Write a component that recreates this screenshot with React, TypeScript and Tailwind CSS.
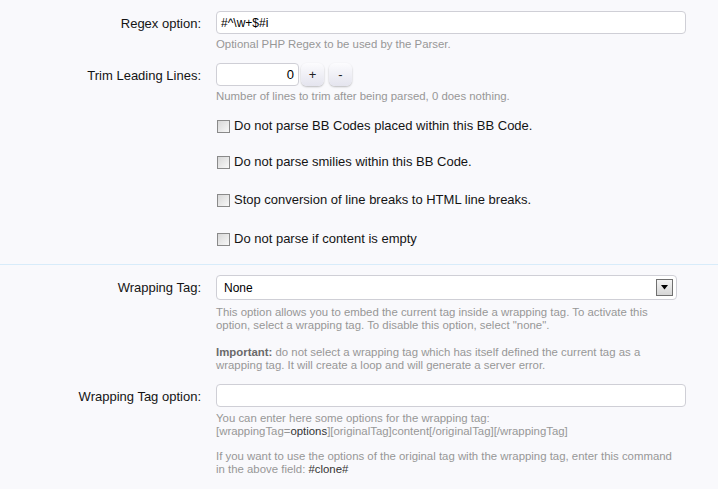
const Hint = ({ children, className = "" }: { children: React.ReactNode; className?: string }) => (
  <p className={"whitespace-nowrap text-[11.4px] leading-[13px] text-[#979797] " + className}>{children}</p>
);

const Row = ({ label, children, className = "" }: { label?: string; children: React.ReactNode; className?: string }) => (
  <div className={"flex " + className}>
    <div className="w-[201px] shrink-0 pt-[3px] text-right text-[13px] text-[#141414]">{label}</div>
    <div className="ml-[15px] flex-1 pr-[32px]">{children}</div>
  </div>
);

const Check = ({ label, className = "" }: { label: string; className?: string }) => (
  <label className={"flex items-center gap-[4px] text-[13px] leading-[20px] text-[#141414] " + className}>
    <span className="ml-[1px] h-[13px] w-[13px] border border-[#8a8a8a] bg-gradient-to-br from-[#d8d8d8] to-[#f8f8f8]" />
    <span>{label}</span>
  </label>
);

const StepButton = ({ text }: { text: string }) => (
  <button className="flex h-[23px] w-[23px] items-center justify-center rounded-[6px] bg-gradient-to-b from-[#fcfcfe] to-[#e4e4ee] text-[13px] text-[#222] shadow-[0_1px_2px_rgba(0,0,0,0.25)]">
    {text}
  </button>
);

export default function App() {
  return (
    <div className="min-h-screen bg-[#f9f9fc] font-['Liberation_Sans',Arial,sans-serif]">
      <div className="pt-[11px]">
        <Row label="Regex option:">
          <div className="flex h-[23px] items-center rounded-[4px] border border-[#cfcfd6] bg-white px-[4px] text-[12px] text-black">
            #^\w+$#i
          </div>
          <Hint className="mt-[4px]">Optional PHP Regex to be used by the Parser.</Hint>
        </Row>

        <Row label="Trim Leading Lines:" className="mt-[12px]">
          <div className="flex items-center gap-[2px]">
            <div className="flex h-[23px] w-[83px] items-center justify-end rounded-[4px] border border-[#cfcfd6] bg-white px-[4px] text-[13px] text-black">
              0
            </div>
            <StepButton text="+" />
            <div className="w-[1px]" />
            <StepButton text="-" />
          </div>
          <Hint className="mt-[4px]">Number of lines to trim after being parsed, 0 does nothing.</Hint>
        </Row>

        <Row className="mt-[13px]">
          <Check label="Do not parse BB Codes placed within this BB Code." />
          <Check className="mt-[16px]" label="Do not parse smilies within this BB Code." />
          <Check className="mt-[18px]" label="Stop conversion of line breaks to HTML line breaks." />
          <Check className="mt-[19px]" label="Do not parse if content is empty" />
        </Row>

        <div className="mt-[15px] h-[1px] bg-[#d8ecfa]" />

        <Row label="Wrapping Tag:" className="mt-[10px]">
          <div className="mr-[9px] flex h-[25px] items-center justify-between rounded-[4px] border border-[#cfcfd6] bg-white pl-[7px] pr-[3px] text-[12px] text-black">
            <span>None</span>
            <span className="flex h-[17px] w-[17px] items-center justify-center border border-[#707070] bg-gradient-to-b from-[#f4f4f4] to-[#d6d6d6]">
              <svg width="8" height="5" viewBox="0 0 8 5">
                <path d="M0 0h7L3.5 4.5z" fill="#000" />
              </svg>
            </span>
          </div>
          <Hint className="mt-[6px]">
            This option allows you to embed the current tag inside a wrapping tag. To activate this
            <br />
            option, select a wrapping tag. To disable this option, select "none".
          </Hint>
          <Hint className="mt-[14px]">
            <b className="text-[#6a6a6a]">Important:</b> do not select a wrapping tag which has itself defined the current
            tag as a
            <br />
            wrapping tag. It will create a loop and will generate a server error.
          </Hint>
        </Row>

        <Row label="Wrapping Tag option:" className="mt-[12px]">
          <div className="h-[23px] rounded-[4px] border border-[#cfcfd6] bg-white" />
          <Hint className="mt-[5px]">
            You can enter here some options for the wrapping tag:
            <br />
            [wrappingTag=<span className="text-[#333]">options</span>][originalTag]content[/originalTag][/wrappingTag]
          </Hint>
          <Hint className="mt-[12px]">
            If you want to use the options of the original tag with the wrapping tag, enter this command
            <br />
            in the above field: <span className="text-[#333]">#clone#</span>
          </Hint>
        </Row>
      </div>
    </div>
  );
}
